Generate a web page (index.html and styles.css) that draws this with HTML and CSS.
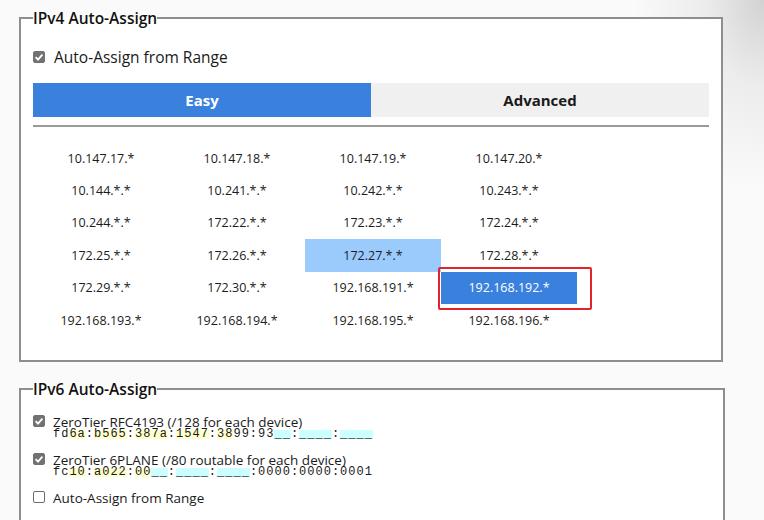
FILE: index.html
```html
<!DOCTYPE html>
<html lang="en">
<head>
<meta charset="utf-8">
<title>Auto-Assign</title>
<link rel="stylesheet" href="styles.css">
</head>
<body>
<div class="page">
  <fieldset class="box box-v4">
    <legend class="box-title">IPv4 Auto-Assign</legend>
    <div class="check-row">
      <span class="cb cb-on"><svg viewBox="0 0 12 12" width="12" height="12"><path d="M2.6 6.2 L5 8.6 L9.4 3.6" fill="none" stroke="#fff" stroke-width="1.8"/></svg></span>
      <span class="check-label">Auto-Assign from Range</span>
    </div>
    <div class="tabs">
      <div class="tab tab-active">Easy</div>
      <div class="tab">Advanced</div>
    </div>
    <div class="rule"></div>
    <div class="ranges">
      <div class="cell">10.147.17.*</div>
      <div class="cell">10.147.18.*</div>
      <div class="cell">10.147.19.*</div>
      <div class="cell">10.147.20.*</div>
      <div class="cell">10.144.*.*</div>
      <div class="cell">10.241.*.*</div>
      <div class="cell">10.242.*.*</div>
      <div class="cell">10.243.*.*</div>
      <div class="cell">10.244.*.*</div>
      <div class="cell">172.22.*.*</div>
      <div class="cell">172.23.*.*</div>
      <div class="cell">172.24.*.*</div>
      <div class="cell">172.25.*.*</div>
      <div class="cell">172.26.*.*</div>
      <div class="cell cell-hover">172.27.*.*</div>
      <div class="cell">172.28.*.*</div>
      <div class="cell">172.29.*.*</div>
      <div class="cell">172.30.*.*</div>
      <div class="cell">192.168.191.*</div>
      <div class="cell cell-selected">192.168.192.*</div>
      <div class="cell">192.168.193.*</div>
      <div class="cell">192.168.194.*</div>
      <div class="cell">192.168.195.*</div>
      <div class="cell">192.168.196.*</div>
      <div class="mark"></div>
    </div>
  </fieldset>

  <fieldset class="box box-v6">
    <legend class="box-title">IPv6 Auto-Assign</legend>
    <div class="opt">
      <span class="cb cb-on"><svg viewBox="0 0 12 12" width="12" height="12"><path d="M2.6 6.2 L5 8.6 L9.4 3.6" fill="none" stroke="#fff" stroke-width="1.8"/></svg></span>
      <div class="opt-text">
        <div class="opt-label">ZeroTier RFC4193 (/128 for each device)</div>
        <div class="addr">fd<span class="net">6a</span>:<span class="net">b565</span>:<span class="net">387a</span>:<span class="net">1547</span>:<span class="net">38</span>99:93<span class="node">__</span>:<span class="node">____</span>:<span class="node">____</span></div>
      </div>
    </div>
    <div class="opt">
      <span class="cb cb-on"><svg viewBox="0 0 12 12" width="12" height="12"><path d="M2.6 6.2 L5 8.6 L9.4 3.6" fill="none" stroke="#fff" stroke-width="1.8"/></svg></span>
      <div class="opt-text">
        <div class="opt-label">ZeroTier 6PLANE (/80 routable for each device)</div>
        <div class="addr">fc<span class="net">10</span>:<span class="net">a022</span>:<span class="net">00</span><span class="node">__</span>:<span class="node">____</span>:<span class="node">____</span>:0000:0000:0001</div>
      </div>
    </div>
    <div class="opt">
      <span class="cb"></span>
      <div class="opt-text">
        <div class="opt-label">Auto-Assign from Range</div>
      </div>
    </div>
  </fieldset>
</div>
</body>
</html>
```

FILE: styles.css
```css
html, body {
  margin: 0;
  height: 100%;
}
body {
  background:
    radial-gradient(130px 190px at 100% 0, #d2d2d2 0%, #ececec 45%, rgba(250,250,250,0) 100%) no-repeat,
    #fafafa;
  font-family: "Open Sans", "Noto Sans", sans-serif;
  color: #1a1a1a;
  overflow: hidden;
}
.page {
  padding: 8px 0 0 19px;
}
.box {
  box-sizing: border-box;
  margin: 0;
  border: 2px solid #8e8e8e;
  background: #fff;
  min-width: 0;
}
.box-v4 {
  width: 704px;
  padding: 19px 12px 24px 12px;
}
.box-v6 {
  width: 706px;
  margin-top: 17px;
  padding: 15.5px 12px 20px 12px;
}
.box-title {
  padding: 0;
  font-size: 15.5px;
  line-height: 20px;
  font-weight: 600;
  color: #111;
}
.check-row {
  display: flex;
  align-items: center;
  gap: 9px;
  height: 20px;
}
.check-label {
  font-size: 15.5px;
  color: #1a1a1a;
}
.cb {
  box-sizing: border-box;
  width: 12px;
  height: 12px;
  flex: none;
  border: 1px solid #6b6b6b;
  border-radius: 2px;
  background: #fff;
  display: block;
}
.cb svg {
  display: block;
  margin: -1px;
}
.cb-on {
  background: #727272;
  border-color: #727272;
}
.tabs {
  display: flex;
  margin-top: 16px;
  height: 34px;
}
.tab {
  flex: 1;
  display: flex;
  align-items: center;
  justify-content: center;
  background: #f0f0f0;
  font-size: 15px;
  font-weight: 700;
  color: #1a1a1a;
}
.tab-active {
  background: #3a80dd;
  color: #fff;
}
.rule {
  height: 2px;
  background: #9a9a9a;
  margin-top: 8px;
}
.ranges {
  position: relative;
  display: grid;
  grid-template-columns: repeat(4, 136px);
  grid-auto-rows: 32.4px;
  margin-top: 15px;
}
.cell {
  display: flex;
  align-items: center;
  justify-content: center;
  font-size: 12.5px;
  color: #1c1c1c;
}
.cell-hover {
  background: #9bcbfd;
}
.cell-selected {
  background: #3a80dd;
  color: #fff;
}
.mark {
  position: absolute;
  left: 405px;
  top: 125px;
  width: 154px;
  height: 43px;
  box-sizing: border-box;
  border: 2.5px solid #e3232c;
  border-radius: 2px;
}
.opt {
  display: flex;
  align-items: flex-start;
  gap: 8px;
  margin-bottom: 13px;
}
.opt-label {
  font-size: 13.5px;
  line-height: 15px;
  color: #1a1a1a;
}
.addr {
  margin-top: -2px;
  font-family: "Liberation Mono", "DejaVu Sans Mono", monospace;
  font-size: 12px;
  line-height: 12px;
  letter-spacing: 1px;
  color: #1a1a1a;
  white-space: pre;
}
.net {
  background: linear-gradient(#ffffcc, #ffffcc) 0 60% / 100% 9px no-repeat;
}
.node {
  background: linear-gradient(#ccffff, #ccffff) 0 60% / 100% 9px no-repeat;
}
```
